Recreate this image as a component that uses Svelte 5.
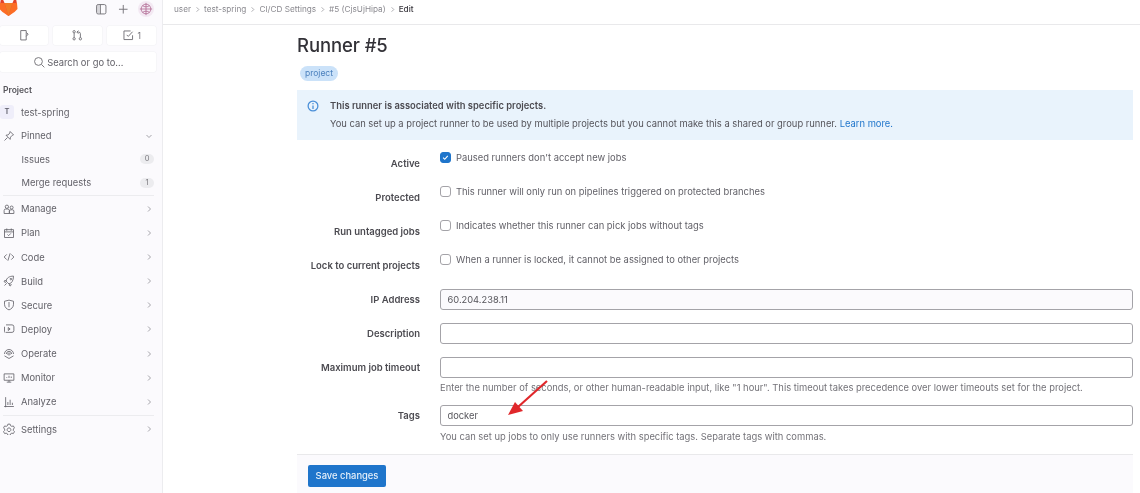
<script>
  const icon = {
    manage: 'M3 5a2.200 2.200 0 1 1 4.400 0A2.200 2.200 0 0 1 3 5zM9.500 6a2 2 0 1 1 4 0 2 2 0 0 1-4 0zM1.500 14v-4a2 2 0 0 1 2-2h3a2 2 0 0 1 2 2v4zM8.500 14v-3a2 2 0 0 1 2-2h2a2 2 0 0 1 2 2v3z',
    plan: 'M2 3.500h12v10.500H2zM2 6.500h12M5 2v3M11 2v3M6 10l1.500 1.500L10.500 8.500',
    code: 'M5 4.500 1.500 8 5 11.500M11 4.500 14.500 8 11 11.500M9.500 3 6.500 13',
    build: 'M6 10 4 8c1-4 4-6.500 10-6.500C14 7.500 11.500 11 8 12zM4.500 7.500H2L1.500 9 4 10M8.500 11.500V14l1.500.5 1-2.500M5 11l-3 3M10.500 4.500a1 1 0 1 0 .01 0',
    secure: 'M8 1.500 14 3v4c0 4-3 6.500-6 7.500C5 13.500 2 11 2 7V3zM8 4v7',
    deploy: 'M4 2.500h8a2.500 2.500 0 0 1 2.500 2.500v5a2.500 2.500 0 0 1-2.500 2.500H4M2 5v6a2.500 2.500 0 0 0 1 2M7 6l2.500 2L7 10z',
    operate: 'M2 8a6 6 0 0 1 12 0M4.500 8a3.500 3.500 0 0 1 7 0M8 6.500a1.500 1.500 0 1 0 .01 0M2 10.500 8 14l6-3.500',
    monitor: 'M1.500 2.500h13v8.500h-13zM5 13.500h6M8 11v2.500M5 8V7M8 8V5M11 8V6',
    analyze: 'M1.500 14h13M3.500 1.500V15M6.500 12V8M9.500 12V5M12.500 12V9',
    settings: 'M6.500 1.500h3l.5 2 1.800 1 2-.6 1.500 2.600-1.500 1.500v2l1.500 1.500-1.500 2.600-2-.6-1.800 1-.5 2h-3l-.5-2-1.800-1-2 .6L.7 11.500l1.500-1.500V8L.7 6.500l1.500-2.600 2 .6L6 3.500zM8 6.500a2.500 2.500 0 1 0 .01 0'
  };
  const nav1 = [['Manage','manage'],['Plan','plan'],['Code','code'],['Build','build'],['Secure','secure'],['Deploy','deploy'],['Operate','operate'],['Monitor','monitor'],['Analyze','analyze']];
  const checks = [
    ['Active', "Paused runners don't accept new jobs", true],
    ['Protected', 'This runner will only run on pipelines triggered on protected branches', false],
    ['Run untagged jobs', 'Indicates whether this runner can pick jobs without tags', false],
    ['Lock to current projects', 'When a runner is locked, it cannot be assigned to other projects', false]
  ];
  const crumbs = ['user', 'test-spring', 'CI/CD Settings', '#5 (CjsUjHipa)'];
</script>

<div class="page">
  <aside class="side">
    <div class="brand">
      <svg class="logo" viewBox="0 0 18 18" width="18" height="18" aria-hidden="true">
        <path fill="#e24329" d="M8.500 17 2 11.500 0 5 1.500-3 4.500 4h8l3-7L17 5l-2 6.500z"/>
        <path fill="#fc6d26" d="M8.500 17 4.500 4H0l-.5 6 3 3zM8.500 17l4-13H17l.5 6-3 3z"/>
        <path fill="#fca326" d="M8.500 17 4.500 4h8z" opacity=".6"/>
      </svg>
      <div class="brand-tools">
        <svg class="ti" viewBox="0 0 16 16" aria-hidden="true"><rect x="2" y="2" width="12" height="12" rx="2"/><path d="M7 2v12"/><path class="fill" d="M2.500 2.500H7v11H2.500z"/></svg>
        <svg class="ti" viewBox="0 0 16 16" aria-hidden="true"><path d="M8 2.500v11M2.500 8h11"/></svg>
        <div class="avatar">
          <svg viewBox="0 0 16 16" aria-hidden="true"><circle cx="8" cy="8" r="5.500"/><path d="M8 1v14M1 8h14M4 4c2 2 6 2 8 0M4 12c2-2 6-2 8 0"/></svg>
        </div>
      </div>
    </div>
    <div class="quick">
      <div class="qb">
        <svg class="ti" viewBox="0 0 16 16" aria-hidden="true"><path d="M3.500 2h7v12h-7zM10.500 4.500l2.500 2-2.500 3"/></svg>
      </div>
      <div class="qb">
        <svg class="ti" viewBox="0 0 16 16" aria-hidden="true"><circle cx="4" cy="3.500" r="1.500"/><circle cx="4" cy="12.500" r="1.500"/><circle cx="12" cy="12.500" r="1.500"/><path d="M4 5v6M12 11V6a2 2 0 0 0-2-2H8M9.500 2 7.500 4l2 2"/></svg>
      </div>
      <div class="qb">
        <svg class="ti" viewBox="0 0 16 16" aria-hidden="true"><path d="M13.500 8v5.500h-11v-11H11M6 7.500l2 2 5.500-6"/></svg>
        <span class="qn">1</span>
      </div>
    </div>
    <div class="search">
      <svg class="ti" viewBox="0 0 16 16" aria-hidden="true"><circle cx="7" cy="7" r="5"/><path d="m11 11 3.500 3.500"/></svg>
      <span>Search or go to...</span>
    </div>
    <div class="sec">Project</div>
    <div class="proj"><span class="pa">T</span><span>test-spring</span></div>
    <div class="item pinned">
      <svg class="ni" viewBox="0 0 16 16" aria-hidden="true"><path d="M9.500 2 14 6.500l-1.500.5-2.500 2.500-.5 3L4 7l3-.5L9 4zM6 10l-4 4"/></svg>
      <span class="lbl">Pinned</span>
      <svg class="chev" viewBox="0 0 8 8" aria-hidden="true"><path d="m1.500 3 2.500 2.500L6.500 3"/></svg>
    </div>
    <div class="sub"><span class="lbl">Issues</span><span class="cnt">0</span></div>
    <div class="sub"><span class="lbl">Merge requests</span><span class="cnt">1</span></div>
    <hr class="div first" />
    {#each nav1 as [name, key]}
      <div class="item">
        <svg class="ni" viewBox="0 0 16 16" aria-hidden="true"><path d={icon[key]} /></svg>
        <span class="lbl">{name}</span>
        <svg class="chev" viewBox="0 0 8 8" aria-hidden="true"><path d="M3 1.500 5.500 4 3 6.500"/></svg>
      </div>
    {/each}
    <hr class="div last" />
    <div class="item">
      <svg class="ni" viewBox="0 0 16 16" aria-hidden="true"><path d={icon.settings} /></svg>
      <span class="lbl">Settings</span>
      <svg class="chev" viewBox="0 0 8 8" aria-hidden="true"><path d="M3 1.500 5.500 4 3 6.500"/></svg>
    </div>
  </aside>

  <main class="main">
    <nav class="crumbs">
      {#each crumbs as c}
        <span>{c}</span><svg class="sep" viewBox="0 0 8 8" aria-hidden="true"><path d="M3 1.500 5.500 4 3 6.500"/></svg>
      {/each}
      <span class="cur">Edit</span>
    </nav>
    <div class="content">
      <h1>Runner #5</h1>
      <span class="badge">project</span>
      <div class="alert">
        <svg class="info" viewBox="0 0 16 16" aria-hidden="true"><circle cx="8" cy="8" r="6.500"/><path d="M8 7.200V12M8 4v1.500"/></svg>
        <div>
          <div class="at">This runner is associated with specific projects.</div>
          <div class="ab">You can set up a project runner to be used by multiple projects but you cannot make this a shared or group runner. <span class="link">Learn more.</span></div>
        </div>
      </div>
      <div class="form">
        {#each checks as [l, t, on]}
          <div class="row chk">
            <div class="label">{l}</div>
            <div class="field cf">
              <span class="box" class:on>
                {#if on}<svg viewBox="0 0 12 12" aria-hidden="true"><path d="m2.800 6.200 2.200 2.200 4-4.600"/></svg>{/if}
              </span>
              <span>{t}</span>
            </div>
          </div>
        {/each}
        <div class="row inp ip">
          <div class="label">IP Address</div>
          <div class="field"><div class="input ro">60.204.238.11</div></div>
        </div>
        <div class="row inp">
          <div class="label">Description</div>
          <div class="field"><div class="input"></div></div>
        </div>
        <div class="row inp tall">
          <div class="label">Maximum job timeout</div>
          <div class="field">
            <div class="input"></div>
            <div class="help">Enter the number of seconds, or other human-readable input, like "1 hour". This timeout takes precedence over lower timeouts set for the project.</div>
          </div>
        </div>
        <div class="row inp">
          <div class="label">Tags</div>
          <div class="field">
            <div class="input">docker</div>
            <div class="help last-help">You can set up jobs to only use runners with specific tags. Separate tags with commas.</div>
          </div>
        </div>
      </div>
      <div class="footer"><span class="save">Save changes</span></div>
      <svg class="arrow" viewBox="0 0 50 40" width="50" height="40" aria-hidden="true">
        <path d="M41 1 12 27" stroke="#e0272b" stroke-width="2.200" fill="none"/>
        <path d="M2 35 9 22l8 9z" fill="#e0272b"/>
      </svg>
    </div>
  </main>
</div>

<style>
  :global(body) { margin: 0; background: #fff; }
  .page {
    width: 1140px; height: 493px; overflow: hidden; display: flex;
    font-family: Inter, "Liberation Sans", sans-serif; font-size: 9.4px; color: #4c4b51;
    filter: blur(.35px);
  }
  svg { display: block; flex: none; }
  .side {
    width: 163px; flex: none; box-sizing: border-box; height: 493px; background: #fbfafd;
    border-right: 1px solid #ececef; padding: 0 6px 0 0; position: relative;
  }
  .brand { height: 26px; display: flex; justify-content: space-between; }
  .logo { margin-top: -1px; }
  .brand-tools { display: flex; align-items: center; height: 18px; gap: 9px; }
  .ti { width: 12.5px; height: 12.5px; fill: none; stroke: #737278; stroke-width: 1.200; }
  .ti .fill { fill: #b5b4ba; stroke: none; opacity: .5; }
  .avatar {
    width: 16px; height: 16px; border-radius: 50%; background: #f3e9f3;
    display: flex; align-items: center; justify-content: center; margin-right: 2px;
  }
  .avatar svg { width: 14px; height: 14px; fill: none; stroke: #b06a92; stroke-width: .9; }
  .quick { display: flex; gap: 5px; height: 19px; }
  .qb {
    flex: 1; background: #fff; border-radius: 2px; display: flex; align-items: center;
    justify-content: center; gap: 3px; min-width: 0; box-shadow: 0 0 0 .5px #f2f1f4;
  }
  .qb:first-child { flex: 0 0 48px; }
  .qn { font-size: 8.500px; color: #737278; }
  .search {
    height: 20px; margin-top: 7px; background: #fff; border-radius: 2px; display: flex;
    align-items: center; justify-content: center; gap: 2px; color: #626168; font-size: 9.400px;
    box-shadow: 0 0 0 .5px #f2f1f4;
  }
  .sec { font-size: 8.500px; font-weight: 600; color: #55545a; padding-left: 3px; margin-top: 12px; height: 12px; line-height: 12px; }
  .proj { display: flex; align-items: center; gap: 7px; height: 14px; margin-top: 9px; color: #626168; }
  .pa {
    width: 14px; height: 14px; background: #efeefa; border-radius: 3px; font-size: 7.500px; font-weight: 600;
    color: #5b5a66; text-align: center; line-height: 14px;
  }
  .item, .sub { display: flex; align-items: center; height: 24.125px; color: #626168; padding-right: 2px; }
  .pinned { margin-top: 5px; height: 23.500px; }
  .sub { height: 23.500px; padding-left: 21.500px; padding-right: 2px; }
  .ni { width: 12px; height: 12px; margin: 0 6.500px 0 2.500px; fill: none; stroke: #626168; stroke-width: 1.100; }
  .lbl { flex: 1; }
  .chev { width: 8px; height: 8px; fill: none; stroke: #9b9aa0; stroke-width: .9; margin-right: 1px; }
  .cnt {
    background: #ececef; border-radius: 6px; width: 14px; height: 10px; line-height: 10px; text-align: center;
    font-size: 7.500px; color: #77767c;
  }
  .div { border: 0; border-top: 1px solid #ececef; }
  .div.first { margin: .6px 2px .6px 3px; }
  .div.last { margin: 1.300px 2px 1.300px 3px; }

  .main { flex: 1; min-width: 0; }
  .crumbs {
    height: 25px; box-sizing: border-box; border-bottom: 1px solid #e9e9eb; padding: 0 0 6px 11px;
    display: flex; align-items: center; gap: 3px; font-size: 8.200px; color: #8b8a90;
  }
  .sep { width: 7px; height: 7px; fill: none; stroke: #8b8a90; stroke-width: .8; }
  .cur { color: #3a383f; font-weight: 500; }
  .content { margin: 0 7px 0 134px; position: relative; }
  h1 { margin: 9px 0 0; font-size: 18.500px; line-height: 22px; font-weight: 500; color: #333238; letter-spacing: -.1px; }
  .badge {
    display: inline-block; margin: 10px 0 0 3px; height: 15px; line-height: 15px; padding: 0 5px; border-radius: 8px;
    background: #cbe2f9; color: #4b80bd; font-size: 8.500px; vertical-align: top;
  }
  .alert {
    margin-top: 9px; height: 50px; background: #e9f3fc; display: flex; box-sizing: border-box;
    padding: 10px 0 0 10px; gap: 11px; color: #55545a;
  }
  .info { width: 12px; height: 12px; fill: none; stroke: #4a8fd8; stroke-width: 1.700; }
  .at { font-weight: 600; font-size: 9.400px; height: 18px; line-height: 12px; color: #4c4b51; }
  .ab { line-height: 12px; font-size: 9.380px; }
  .link { color: #1f75cb; }
  .form { margin-top: 11px; }
  .row { display: flex; }
  .label { width: 123px; text-align: right; font-weight: 600; font-size: 9.500px; color: #4c4b51; flex: none; }
  .field { flex: 1; margin-left: 20px; min-width: 0; }
  .chk { height: 34px; }
  .chk .label { padding-top: 7px; line-height: 12px; }
  .cf { display: flex; align-items: flex-start; gap: 5px; line-height: 12px; color: #626168; padding-top: 1px; }
  .box {
    width: 11px; height: 11px; box-sizing: border-box; border: 1px solid #a4a3a8; border-radius: 3px; background: #fff; flex: none;
  }
  .box.on { background: #1f75cb; border-color: #1f75cb; }
  .box svg { width: 9px; height: 9px; fill: none; stroke: #fff; stroke-width: 1.500; }
  .inp { min-height: 34px; }
  .ip { margin-top: 2px; }
  .tall { margin-bottom: 9px; }
  .inp .label { line-height: 12px; padding-top: 5px; }
  .input {
    height: 21px; box-sizing: border-box; border: 1px solid #a4a3a8; border-radius: 3px; padding: 0 6.500px;
    line-height: 19px; font-size: 9.300px; color: #55545a; background: #fff;
  }
  .input.ro { background: #fbfafd; }
  .help { font-size: 9.380px; line-height: 12px; margin-top: 4px; color: #737278; height: 14px; }
  .last-help { margin-top: 5px; }
  .footer {
    margin-top: 9px; height: 40px; background: #fbfafd; border-top: 1px solid #e9e9eb; padding: 10px 0 0 11px;
  }
  .save {
    display: block; width: 78px; height: 22px; line-height: 22px; text-align: center; background: #1f75cb;
    color: #e6f0fa; border-radius: 2px; font-size: 9.400px; font-weight: 500;
  }
  .arrow { position: absolute; left: 209px; top: 346px; }
</style>
